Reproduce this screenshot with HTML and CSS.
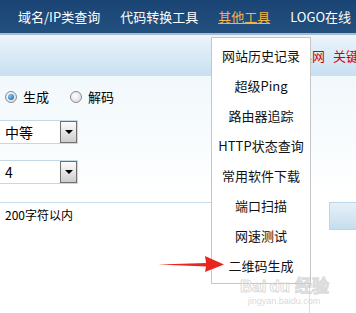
FILE: index.html
```html
<!DOCTYPE html>
<html lang="zh-CN">
<head>
    <meta charset="UTF-8">
    <meta name="viewport" content="width=device-width, initial-scale=1.0">
    <title>二维码生成</title>
    <link rel="stylesheet" href="styles.css">
</head>
<body>
    <div class="nav">
        <a class="nav-item">域名/IP类查询</a>
        <a class="nav-item">代码转换工具</a>
        <a class="nav-item active">其他工具</a>
        <a class="nav-item">LOGO在线</a>
    </div>
    <div class="subbar">
        <span class="hot">具网</span>
        <span class="hot">关键词</span>
    </div>
    <div class="main">
        <div class="radio-row">
            <label class="radio-group"><span class="radio on"></span>生成</label>
            <label class="radio-group"><span class="radio"></span>解码</label>
        </div>
        <div class="select first">
            <span>中等</span>
            <span class="select-btn"></span>
        </div>
        <div class="select">
            <span>4</span>
            <span class="select-btn"></span>
        </div>
        <div class="bottom">
            <div class="bottom-left">200字符以内</div>
            <div class="bottom-right">
                <div class="blue-box"></div>
            </div>
        </div>
    </div>

    <ul class="menu">
        <li>网站历史记录</li>
        <li>超级Ping</li>
        <li>路由器追踪</li>
        <li>HTTP状态查询</li>
        <li>常用软件下载</li>
        <li>端口扫描</li>
        <li>网速测试</li>
        <li>二维码生成</li>
    </ul>

    <svg class="arrow" width="68" height="20" viewBox="0 0 68 20">
        <path d="M0 9.6 L48 8 L47 1 L66 9.5 L47 17 L48 11.5 Z" fill="#e8261f"/>
    </svg>

    <div class="watermark">
        <div class="wm-big">Bai<span class="wm-gap"></span>du 经验</div>
        <div class="wm-small">jingyan.baidu.com</div>
    </div>
</body>
</html>
```

FILE: styles.css
```css
body {
    margin: 0;
    width: 356px;
    height: 313px;
    overflow: hidden;
    position: relative;
    font-family: "Noto Sans CJK SC", sans-serif;
    font-size: 13px;
    color: #000;
    background-color: #fff;
}

.nav {
    height: 33px;
    display: flex;
    align-items: center;
    gap: 20px;
    padding-left: 18px;
    white-space: nowrap;
    background: linear-gradient(#1a4473, #22507f);
}

.nav-item {
    color: #fff;
    font-size: 13px;
    line-height: 16px;
}

.nav-item.active {
    color: #f0b54a;
    text-decoration: underline;
}

.subbar {
    height: 41px;
    border-top: 2px solid #a9bccd;
    display: flex;
    align-items: center;
    gap: 8px;
    padding-left: 299px;
    white-space: nowrap;
    overflow: hidden;
    background: linear-gradient(#edf6fb 0%, #e2eff8 25%, #c8e0f1 100%);
}

.hot {
    color: #d40000;
    font-size: 13px;
}

.main {
    background: linear-gradient(#f1f8fc, #fff 120px);
    height: 237px;
}

.radio-row {
    display: flex;
    align-items: center;
    gap: 21px;
    padding: 13px 0 0 5px;
    height: 16px;
}

.radio-group {
    display: flex;
    align-items: center;
    gap: 6px;
    font-size: 13px;
    line-height: 16px;
}

.radio {
    width: 12px;
    height: 12px;
    box-sizing: border-box;
    border-radius: 50%;
    border: 1px solid #8c8c8c;
    background: radial-gradient(circle at 40% 40%, #fff, #d4d4d4);
    display: flex;
    align-items: center;
    justify-content: center;
}

.radio.on::after {
    content: "";
    width: 6px;
    height: 6px;
    border-radius: 50%;
    background: radial-gradient(circle at 35% 35%, #7cc8ff, #0b5aa6);
}

.select {
    width: 78px;
    height: 24px;
    box-sizing: border-box;
    margin-top: 16px;
    border: 1px solid #c3d9e6;
    border-left: none;
    background-color: #fff;
    display: flex;
    align-items: center;
    justify-content: space-between;
    padding-left: 5px;
    font-size: 14px;
}

.select.first {
    margin-top: 15px;
}

.select-btn {
    width: 17px;
    height: 22px;
    box-sizing: border-box;
    border: 1px solid #707070;
    background: linear-gradient(#fdfdfd, #cdcdcd);
    display: flex;
    align-items: center;
    justify-content: center;
}

.select-btn::after {
    content: "";
    border-left: 4px solid transparent;
    border-right: 4px solid transparent;
    border-top: 4px solid #000;
}

.bottom {
    display: flex;
    margin-top: 18px;
    height: 120px;
}

.bottom-left {
    width: 310px;
    box-sizing: border-box;
    border-top: 1px solid #c6dce8;
    border-right: 1px solid #cfe2ec;
    padding: 4px 0 0 5px;
    font-size: 12px;
    line-height: 16px;
}

.bottom-right {
    flex: 1;
    padding-left: 19px;
}

.blue-box {
    height: 28px;
    box-sizing: border-box;
    border: 1px solid #bcd6e8;
    border-right: none;
    background: linear-gradient(#e6f1f9, #c6ddee);
}

.menu {
    position: absolute;
    left: 211px;
    top: 37px;
    width: 100px;
    box-sizing: border-box;
    margin: 0;
    padding: 3px 0 2px;
    list-style: none;
    background-color: #fff;
    border: 1px solid #c6c6c6;
}

.menu li {
    height: 30px;
    line-height: 30px;
    text-align: center;
    font-size: 13px;
    color: #111;
    white-space: nowrap;
}

.arrow {
    position: absolute;
    left: 158px;
    top: 255px;
}

.watermark {
    position: absolute;
    left: 240px;
    top: 277px;
    width: 88px;
    text-align: center;
    white-space: nowrap;
    pointer-events: none;
}

.wm-big {
    font-family: "Liberation Sans", sans-serif;
    font-size: 17px;
    font-weight: bold;
    line-height: 19px;
    color: rgba(255, 255, 255, 0.5);
    -webkit-text-stroke: 1px rgba(190, 190, 190, 0.55);
}

.wm-gap {
    display: inline-block;
    width: 3px;
}

.wm-small {
    font-family: "Liberation Sans", sans-serif;
    font-size: 9px;
    line-height: 11px;
    color: rgba(200, 200, 200, 0.7);
}
```
